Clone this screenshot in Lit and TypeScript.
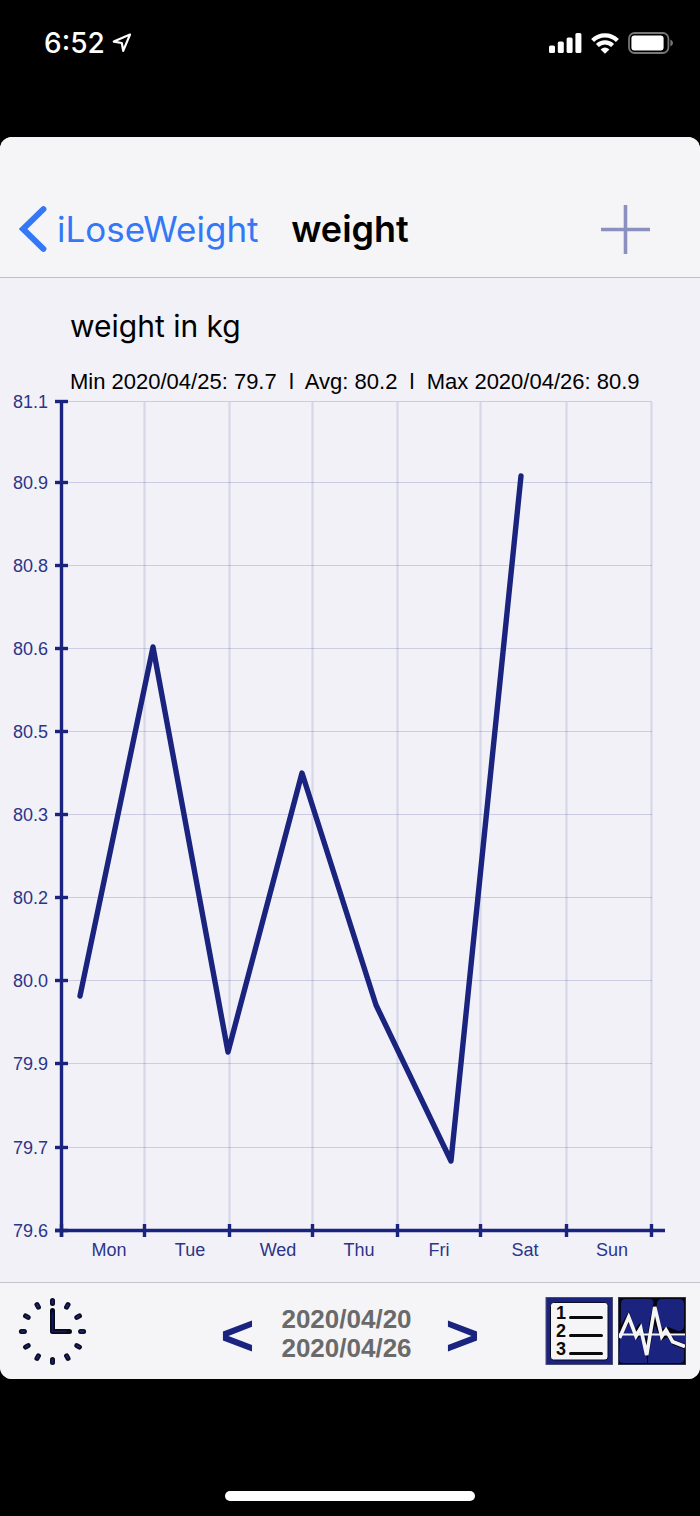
import { LitElement, html, svg, css } from "lit";
import { customElement } from "lit/decorators.js";

interface Point {
  x: number;
  y: number;
}

const Y_TICKS = [
  { label: "81.1", y: 7.5 },
  { label: "80.9", y: 88.5 },
  { label: "80.8", y: 171.5 },
  { label: "80.6", y: 254.5 },
  { label: "80.5", y: 337.5 },
  { label: "80.3", y: 420.5 },
  { label: "80.2", y: 503.5 },
  { label: "80.0", y: 586.5 },
  { label: "79.9", y: 669.5 },
  { label: "79.7", y: 753.5 },
  { label: "79.6", y: 836.5 },
];

const X_TICKS = [61.5, 144.5, 229.5, 312.5, 397.5, 480.5, 566.5, 651.5];

const DAYS = [
  { label: "Mon", x: 109 },
  { label: "Tue", x: 190 },
  { label: "Wed", x: 278 },
  { label: "Thu", x: 359 },
  { label: "Fri", x: 439 },
  { label: "Sat", x: 525 },
  { label: "Sun", x: 612 },
];

const WEIGHTS: Point[] = [
  { x: 80, y: 602 },
  { x: 153, y: 253 },
  { x: 228, y: 658 },
  { x: 302, y: 379 },
  { x: 376, y: 611 },
  { x: 451, y: 767 },
  { x: 521, y: 82 },
];

@customElement("status-bar")
class StatusBar extends LitElement {
  static styles = css`
    :host {
      display: flex;
      justify-content: space-between;
      align-items: center;
      height: 86px;
      padding: 0 27px 0 44px;
      color: #fff;
      font: 500 28px/32px Inter, sans-serif;
    }
    .group {
      display: flex;
      align-items: center;
    }
    .time {
      gap: 7px;
    }
    .signals {
      gap: 9px;
    }
    svg {
      display: block;
    }
  `;

  render() {
    return html`
      <div class="group time">
        <span>6:52</span>
        <svg width="20" height="20" viewBox="0 0 20 20" aria-hidden="true">
          <path
            d="M18 1.6 1.8 8.6 9.8 10 11.2 17.8Z"
            fill="none"
            stroke="#fff"
            stroke-width="2.2"
            stroke-linejoin="round"
          />
        </svg>
      </div>
      <div class="group signals">
        <svg width="33" height="20" viewBox="0 0 33 20" fill="#fff" aria-label="Signal">
          <rect x="0" y="12.4" width="6" height="7.6" rx="1.6" />
          <rect x="8.8" y="8.6" width="6" height="11.4" rx="1.6" />
          <rect x="17.6" y="4.4" width="6" height="15.6" rx="1.6" />
          <rect x="26.4" y="0" width="6" height="20" rx="1.6" />
        </svg>
        <svg width="28" height="21" viewBox="0 0 28 21" aria-label="Wi-Fi">
          <g fill="none" stroke="#fff" stroke-width="4.2">
            <path d="M1.6 7.4A17.6 17.6 0 0 1 26.4 7.4" />
            <path d="M6.4 12.6A10.8 10.8 0 0 1 21.6 12.6" />
          </g>
          <path d="M9.6 16.4Q14 12.8 18.4 16.4L14 20.8Z" fill="#fff" />
        </svg>
        <svg width="45" height="22" viewBox="0 0 45 22" aria-label="Battery">
          <rect x="1" y="1" width="39.4" height="20" rx="5.6" fill="none" stroke="#777" stroke-width="1.8" />
          <rect x="3.4" y="3.6" width="32.2" height="14.8" rx="3" fill="#fff" />
          <path d="M42.4 7.4Q45 8.6 45 11T42.4 14.6Z" fill="#777" />
        </svg>
      </div>
    `;
  }
}

@customElement("weight-chart")
class WeightChart extends LitElement {
  static styles = css`
    :host {
      display: block;
    }
    .chart {
      display: block;
      width: 100%;
      height: auto;
      overflow: visible;
    }
    .grid {
      stroke: #1a237e;
      stroke-opacity: 0.18;
      stroke-width: 1;
    }
    .columns {
      stroke-opacity: 0.13;
      stroke-width: 2;
    }
    .axis {
      stroke: #1a237e;
      stroke-width: 3.4;
    }
    .line {
      fill: none;
      stroke: #1a237e;
      stroke-width: 5.4;
      stroke-linejoin: round;
      stroke-linecap: round;
    }
    .label {
      fill: #2c3587;
      font: 18px "Liberation Sans", Arial, sans-serif;
    }
    .value {
      text-anchor: end;
    }
    .day {
      text-anchor: middle;
    }
  `;

  render() {
    const points = WEIGHTS.map((p) => `${p.x},${p.y}`).join(" ");
    return html`
      <svg class="chart" viewBox="0 0 700 888" role="img" aria-label="Weight by day">
        <g class="grid">
          ${Y_TICKS.slice(0, -1).map((t) => svg`<line x1="62" x2="652" y1=${t.y} y2=${t.y} />`)}
        </g>
        <g class="grid columns">
          ${X_TICKS.slice(1).map((x) => svg`<line x1=${x} x2=${x} y1="8" y2="836" />`)}
        </g>
        <g class="axis">
          <line x1="61.5" x2="61.5" y1="8" y2="843" />
          <line x1="55" x2="665" y1="836.5" y2="836.5" />
          ${Y_TICKS.map((t) => svg`<line x1="55" x2="68" y1=${t.y} y2=${t.y} />`)}
          ${X_TICKS.map((x) => svg`<line x1=${x} x2=${x} y1="830" y2="843" />`)}
        </g>
        <polyline class="line" points=${points} />
        ${Y_TICKS.map((t) => svg`<text class="label value" x="48" y=${t.y + 6.5}>${t.label}</text>`)}
        ${DAYS.map((d) => svg`<text class="label day" x=${d.x} y="862">${d.label}</text>`)}
      </svg>
    `;
  }
}

@customElement("range-toolbar")
class RangeToolbar extends LitElement {
  static styles = css`
    :host {
      display: grid;
      grid-template-columns: 1fr auto 1fr;
      align-items: center;
      height: 96px;
      padding: 0 14px;
      border-top: 1px solid #c4c4cc;
      background: #f5f5f8;
      font-family: "Liberation Sans", Arial, sans-serif;
    }
    button {
      display: block;
      margin: 0;
      padding: 0;
      border: 0;
      background: none;
      color: #1a237e;
      font: inherit;
      cursor: pointer;
    }
    svg {
      display: block;
    }
    .clock {
      justify-self: start;
      margin-left: 4px;
    }
    .range {
      display: flex;
      align-items: center;
      gap: 27px;
    }
    .step {
      padding-top: 8px;
      font-size: 58px;
      font-weight: 700;
      line-height: 68px;
    }
    .dates {
      margin-right: 7px;
      padding-top: 6px;
      color: #6a6a6a;
      font-size: 26px;
      font-weight: 700;
      line-height: 29px;
    }
    .dates time {
      display: block;
    }
    .views {
      justify-self: end;
      display: flex;
      gap: 5px;
    }
    .number {
      font: 700 18px "Liberation Sans", Arial, sans-serif;
    }
  `;

  render() {
    const marks = Array.from({ length: 12 }, (_, i) => i * 30);
    return html`
      <button class="clock" aria-label="History">
        <svg width="69" height="69" viewBox="0 0 69 69" fill="none" stroke-linecap="round" stroke-linejoin="round">
          ${marks.map(
            (angle) => svg`<g transform="rotate(${angle} 34.5 34.5)">
              <path d="M34.5 3.4V6.4" stroke="#0b0d22" stroke-width="5" />
              <path d="M34.5 3.6V6.2" stroke="#1a237e" stroke-width="1.8" />
            </g>`
          )}
          <path d="M34.5 13.5V34.5H51.5" stroke="#080a1c" stroke-width="5" />
          <path d="M34.5 16V34.5H48" stroke="#141b5c" stroke-width="1.6" />
        </svg>
      </button>
      <div class="range">
        <button class="step" aria-label="Previous week">&lt;</button>
        <div class="dates">
          <time datetime="2020-04-20">2020/04/20</time>
          <time datetime="2020-04-26">2020/04/26</time>
        </div>
        <button class="step" aria-label="Next week">&gt;</button>
      </div>
      <div class="views">
        <button aria-label="List">
          <svg width="68" height="68" viewBox="0 0 68 68">
            <rect x="1" y="0.5" width="66.5" height="67" fill="#1a237e" stroke="#4a4e74" />
            <rect x="5.5" y="5.5" width="57.5" height="57.5" rx="3" fill="#f5f5f8" stroke="#0b0d22" />
            <g fill="#0a0a0a">
              <text class="number" x="11" y="22">1</text>
              <text class="number" x="11" y="40">2</text>
              <text class="number" x="11" y="58">3</text>
            </g>
            <path d="M25.5 20.5H56.5M25.5 38.5H56.5M25.5 56.5H56.5" stroke="#0a0a0a" stroke-width="3" stroke-linecap="round" />
          </svg>
        </button>
        <button aria-label="Chart">
          <svg width="68" height="68" viewBox="0 0 68 68">
            <rect width="68" height="68" fill="#05060f" />
            <path
              d="M7 2H32Q35.5 2 35.5 6L32 22 29 42 26 34 22 26 17 32 11 14 3 28V7Q3 2 7 2Z"
              fill="#1a237e"
            />
            <path d="M43 2H61Q66 2 66 7V28Q66 34 60 34L50 30 43 32 39 12Q38 2 43 2Z" fill="#1a237e" />
            <path d="M2 42 11 26 18 43 24 38 29 62V66H5Q1 66 1 62Z" fill="#1a237e" />
            <path d="M30 60 37 28 43 44 49 40 55 48 66 52V62Q66 66 62 66H30Z" fill="#1a237e" />
            <path d="M54 39H67V47L57 43Z" fill="#1a237e" />
            <path d="M0 37.5H68" stroke="#f5f5f8" stroke-width="1.8" />
            <path
              d="M1.5 41 10.7 20 18 39 22.7 31 28.7 58 36.7 10 43.7 39.5 48 33 54.7 44.7 67 49.5"
              fill="none"
              stroke="#f5f5f8"
              stroke-width="3.6"
            />
            <rect x="0.5" y="0.5" width="67" height="67" fill="none" stroke="#33364f" />
          </svg>
        </button>
      </div>
    `;
  }
}

@customElement("app-root")
class AppRoot extends LitElement {
  static styles = css`
    :host {
      display: flex;
      flex-direction: column;
      min-height: 100vh;
      box-sizing: border-box;
      padding-bottom: 15px;
      background: #000;
      color: #000;
      font-family: Inter, sans-serif;
    }
    .window {
      margin-top: 51px;
      border-radius: 12px;
      overflow: hidden;
      background: #f2f1f8;
    }
    .nav {
      display: grid;
      grid-template-columns: 1fr auto 1fr;
      align-items: center;
      padding: 44px 19px 0;
      height: 96px;
      border-bottom: 1px solid #c0c0c6;
      background: #f5f5f8;
    }
    .back {
      display: flex;
      align-items: center;
      gap: 10px;
      color: #3478f6;
      font-size: 35px;
      line-height: 44px;
      text-decoration: none;
    }
    .title {
      margin: 0;
      font-size: 36px;
      font-weight: 600;
      line-height: 44px;
    }
    .add {
      justify-self: end;
      margin: 0 31px 0 0;
      padding: 0;
      border: 0;
      background: none;
      cursor: pointer;
    }
    svg {
      display: block;
    }
    .unit {
      margin: 0;
      padding: 30px 0 26px 70px;
      font-size: 30px;
      font-weight: 400;
      line-height: 36px;
    }
    .stats {
      margin: 0;
      padding-left: 70px;
      font: 22px/24px "Liberation Sans", Arial, sans-serif;
      white-space: pre;
    }
    .home {
      align-self: center;
      width: 250px;
      height: 10px;
      margin-top: auto;
      border-radius: 5px;
      background: #fff;
    }
  `;

  render() {
    return html`
      <status-bar></status-bar>
      <div class="window">
        <header class="nav">
          <a class="back" href="#">
            <svg width="28" height="46" viewBox="0 0 28 46" aria-hidden="true">
              <path
                d="M24.4 3.2 4 23 24.4 42.8"
                fill="none"
                stroke="#3478f6"
                stroke-width="6"
                stroke-linecap="round"
              />
            </svg>
            <span>iLoseWeight</span>
          </a>
          <h1 class="title">weight</h1>
          <button class="add" aria-label="Add">
            <svg width="49" height="49" viewBox="0 0 49 49">
              <path d="M24.5 0V49M0 24.5H49" stroke="#8b90c0" stroke-width="3.6" />
            </svg>
          </button>
        </header>
        <main>
          <h2 class="unit">weight in kg</h2>
          <p class="stats">Min 2020/04/25: 79.7  l  Avg: 80.2  l  Max 2020/04/26: 80.9</p>
          <weight-chart></weight-chart>
        </main>
        <range-toolbar></range-toolbar>
      </div>
      <div class="home"></div>
    `;
  }
}
